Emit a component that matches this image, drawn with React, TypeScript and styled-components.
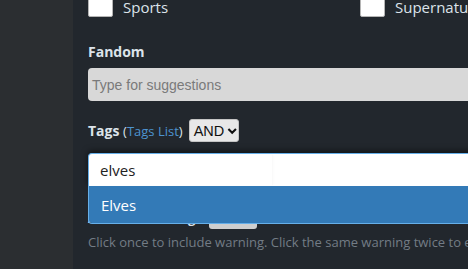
import React from "react";
import styled, { createGlobalStyle } from "styled-components";

const Global = createGlobalStyle`
  html, body { margin: 0; padding: 0; background: #22272d; }
  body { font-family: "Open Sans", "Noto Sans", sans-serif; overflow: hidden; }
  * { box-sizing: border-box; }
`;

const Page = styled.div`
  display: flex;
  width: 468px;
  height: 269px;
  overflow: hidden;
`;

const Sidebar = styled.aside`
  width: 73px;
  flex: none;
  background: #2b2e31;
`;

const Main = styled.main`
  flex: 1;
  min-width: 0;
  background: #22272d;
  padding-left: 15px;
  overflow: hidden;
`;

const Content = styled.div`
  margin-top: -8px;
  width: 460px;
  display: flex;
  flex-direction: column;
`;

const CheckGrid = styled.div`
  display: grid;
  grid-template-columns: 272px 272px;
`;

const CheckItem = styled.label`
  display: flex;
  align-items: flex-start;
  gap: 10px;
  height: 25px;
  color: #dce3ea;
  font-size: 15px;
  white-space: nowrap;
`;

const CheckText = styled.span`
  line-height: 20px;
  padding-top: 5px;
`;

const Box = styled.span`
  width: 25px;
  height: 25px;
  flex: none;
  background: #fff;
  border: 1px solid #b5b5b5;
  border-radius: 2px;
`;

const FieldLabel = styled.div`
  margin-top: 25px;
  color: #dce3ea;
  font-size: 14px;
  font-weight: 700;
  line-height: 20px;
  display: flex;
  align-items: center;
  white-space: nowrap;
`;

const TextInput = styled.div`
  margin-top: 6px;
  height: 33px;
  background: #d8d8d8;
  border-radius: 4px 0 0 4px;
  padding-left: 4px;
  display: flex;
  align-items: center;
  font-family: "Liberation Sans", Arial, sans-serif;
  font-size: 14px;
  color: #7a7a7a;
`;

const Link = styled.span`
  color: #4d94d0;
  font-weight: 400;
  font-size: 13px;
`;

const Paren = styled.span`
  font-weight: 400;
  font-size: 13px;
`;

const SelectBox = styled.span<{ $w: number }>`
  width: ${(p) => p.$w}px;
  height: 23px;
  margin-left: 6px;
  background: #e8e8e8;
  border: 1px solid #c4c4c4;
  border-radius: 3px;
  color: #111;
  font-family: "Liberation Sans", Arial, sans-serif;
  font-weight: 400;
  font-size: 14.5px;
  display: inline-flex;
  align-items: center;
  gap: 3px;
  padding-left: 4px;
`;

const TagRow = styled(FieldLabel)`
  margin-top: 18px;
  height: 23px;
`;

const TagField = styled.div`
  position: relative;
  margin-top: 11px;
`;

const TagInput = styled.div`
  height: 33px;
  background: #fff;
  border: 1px solid #66afe9;
  border-bottom: none;
  border-radius: 4px 0 0 0;
  box-shadow: 0 -2px 6px rgba(0, 0, 0, 0.55);
  display: flex;
  align-items: stretch;
`;

const InnerInput = styled.div`
  width: 184px;
  margin: 1px 0;
  border-right: 1px solid #fafafa;
  box-shadow: 1px 0 2px rgba(0, 0, 0, 0.015);
  padding-left: 11px;
  display: flex;
  align-items: center;
  color: #222;
  font-size: 15px;
`;

const Suggestions = styled.ul`
  position: absolute;
  left: 0;
  right: 0;
  top: 33px;
  margin: 0;
  padding: 0;
  list-style: none;
  z-index: 2;
  border: 1px solid #66afe9;
  border-top: none;
  border-right: none;
  border-radius: 0 0 0 4px;
  overflow: hidden;
`;

const Suggestion = styled.li<{ $active?: boolean }>`
  height: 37px;
  padding-left: 12px;
  display: flex;
  align-items: center;
  background: ${(p) => (p.$active ? "#337ab7" : "#fff")};
  color: ${(p) => (p.$active ? "#fff" : "#333")};
  font-size: 15px;
`;

const WarningRow = styled.div`
  height: 43px;
  padding-top: 21px;
  display: flex;
  align-items: center;
  color: #dce3ea;
  font-size: 13px;
  line-height: 18px;
  font-weight: 700;
  white-space: nowrap;
`;

const GreyBtn = styled.span`
  width: 48px;
  height: 22px;
  margin-left: 14px;
  background: #cfcfcf;
  border-radius: 3px;
`;

const Help = styled.p`
  margin: 4px 0 0;
  color: #737c85;
  font-size: 13px;
  line-height: 18px;
  white-space: nowrap;
`;

const Chevron = () => (
  <svg width="11" height="8" viewBox="0 0 11 8">
    <path d="M1.5 1.8 L5.5 5.8 L9.5 1.8" fill="none" stroke="#111" strokeWidth="2.2" />
  </svg>
);

export default function App() {
  return (
    <>
      <Global />
      <Page>
        <Sidebar />
        <Main>
          <Content>
            <CheckGrid>
              <CheckItem>
                <Box />
                <CheckText>Sports</CheckText>
              </CheckItem>
              <CheckItem>
                <Box />
                <CheckText>Supernatural</CheckText>
              </CheckItem>
            </CheckGrid>
            <FieldLabel>Fandom</FieldLabel>
            <TextInput>Type for suggestions</TextInput>
            <TagRow>
              <span>
                Tags <Paren>(</Paren>
                <Link>Tags List</Link>
                <Paren>)</Paren>
              </span>
              <SelectBox $w={50}>
                AND
                <Chevron />
              </SelectBox>
            </TagRow>
            <TagField>
              <TagInput>
                <InnerInput>elves</InnerInput>
              </TagInput>
              <Suggestions>
                <Suggestion $active>Elves</Suggestion>
              </Suggestions>
              <WarningRow>
                Archive Warning
                <GreyBtn />
              </WarningRow>
            </TagField>
            <Help>
              Click once to include warning. Click the same warning twice to exclude it.
            </Help>
          </Content>
        </Main>
      </Page>
    </>
  );
}
